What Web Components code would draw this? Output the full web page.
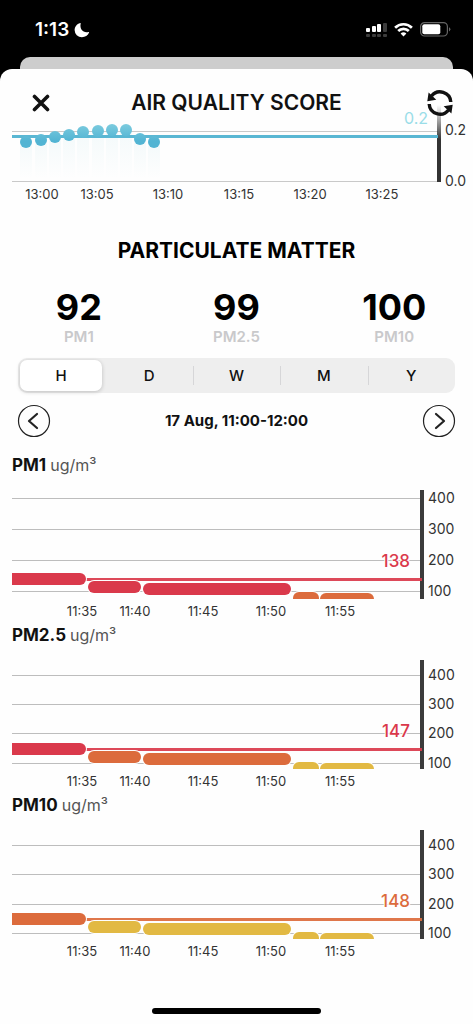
<!DOCTYPE html>
<html lang="en">
<head>
<meta charset="utf-8">
<meta name="viewport" content="width=device-width, initial-scale=1">
<title>Air Quality Score</title>
<style>
  html { background: #fefefe; }
  body { margin: 0; font-family: Inter, "Liberation Sans", sans-serif; color: #111; }
</style>
</head>
<body>
<air-app></air-app>
<script>
const define = (name, render) => customElements.define(name, class extends HTMLElement {
  connectedCallback() {
    if (this.shadowRoot) return;
    this.attachShadow({ mode: 'open' }).innerHTML = render(this);
  }
});

define('status-bar', () => `
  <style>
    :host { display: flex; align-items: center; justify-content: space-between; height: 57px; padding: 2px 22px 0 35px; box-sizing: border-box; color: #fff; }
    .time, .icons { display: flex; align-items: center; }
    .time { gap: 5px; font-size: 19px; font-weight: 600; line-height: 24px; }
    .icons { gap: 7px; }
    svg { display: block; }
  </style>
  <span class="time"><span>1:13</span>
    <svg width="16" height="16" viewBox="0 0 16 16"><path fill="#fff" d="M6.200 .9C2.800 1.900 .6 4.700 .6 8.100a7.300 7.300 0 0 0 7.300 7.200c3.300 0 6-1.900 7.200-4.700.2-.5-.1-.7-.6-.6C9.500 11.300 5.300 7.500 6.700 1.500c.1-.5-.1-.7-.5-.6Z"/></svg>
  </span>
  <span class="icons">
    <svg width="21" height="16" viewBox="0 0 21 16">
      <g fill="#fff"><rect x="0" y="6" width="4" height="4" rx="1"/><rect x="6" y="4" width="4" height="6" rx="1"/><rect x="11" y="2" width="4" height="8" rx="1"/></g>
      <g fill="#3c3c3c"><rect x="17" y="1" width="4" height="9" rx="1"/><rect x="0" y="12" width="4" height="3" rx="1"/><rect x="6" y="12" width="4" height="3" rx="1"/><rect x="11" y="12" width="4" height="3" rx="1"/><rect x="17" y="12" width="4" height="3" rx="1"/></g>
    </svg>
    <svg width="19" height="15" viewBox="0 0 19 15" fill="none" stroke="#fff" stroke-width="2.700">
      <path d="M1.100 5.700a12 12 0 0 1 16.800 0"/><path d="M4.200 9a7.600 7.600 0 0 1 10.600 0"/><path fill="#fff" stroke="none" d="M9.500 14.500 6.600 11.600a4.200 4.200 0 0 1 5.800 0Z"/>
    </svg>
    <svg width="31" height="15" viewBox="0 0 31 15">
      <rect x=".6" y=".6" width="26.800" height="13.400" rx="4" fill="none" stroke="#666" stroke-width="1.200"/>
      <rect x="2.300" y="2.300" width="18" height="10" rx="2" fill="#fff"/>
      <path d="M29 5.200v4.200a2.300 2.300 0 0 0 0-4.200Z" fill="#666"/>
    </svg>
  </span>`);

define('sheet-header', () => `
  <style>
    :host { display: grid; grid-template-columns: 48px 1fr 48px; align-items: center; padding: 18px 17px 6px; position: relative; z-index: 1; }
    h1 { margin: 0; font-size: 21px; font-weight: 600; line-height: 32px; text-align: center; white-space: nowrap; }
    button { width: 48px; height: 32px; padding: 0; border: 0; background: none; display: grid; place-items: center; cursor: pointer; }
    button:last-child { width: 32px; justify-self: end; }
  </style>
  <button aria-label="Close"><svg width="18" height="18" viewBox="0 0 18 18" stroke="#111" stroke-width="3.600" stroke-linecap="round"><path d="m2.500 2.500 13 13M15.500 2.500l-13 13"/></svg></button>
  <h1><slot></slot></h1>
  <button aria-label="Refresh"><svg width="28" height="28" viewBox="0 0 28 28">
    <g fill="none" stroke="#111" stroke-width="3.400"><path d="M5.500 7A10.800 10.800 0 0 1 24.800 13"/><path d="M22.500 21A10.800 10.800 0 0 1 3.200 15"/></g>
    <path fill="#111" d="M2.600 3.500 1.300 12.200 10.300 10.800ZM25.400 24.500l1.300-8.700-9 1.400Z"/>
  </svg></button>`);

define('score-chart', () => {
  const W = 426, pc = v => v / W * 100 + '%';
  const dots = [[14, 17], [29, 15], [43, 12], [57, 10], [71, 7], [86, 6], [100, 5], [114, 5], [128, 14], [142, 17]];
  const ticks = [[30, '13:00'], [85, '13:05'], [156, '13:10'], [227, '13:15'], [298, '13:20'], [370, '13:25']];
  return `
  <style>
    :host { display: block; padding: 0 35px 0 12px; }
    svg { display: block; width: 100%; height: 80px; overflow: visible; }
    text { font-size: 13px; fill: #333; text-anchor: middle; }
    text.scale { font-size: 14px; text-anchor: start; }
    text.now { font-size: 16px; fill: #9adde8; text-anchor: end; }
  </style>
  <svg role="img" aria-label="Air quality score">
    <defs>
      <linearGradient id="axis" x1="0" y1="0" x2="0" y2="1"><stop offset="0" stop-color="#333" stop-opacity="0"/><stop offset=".45" stop-color="#333"/></linearGradient>
      <linearGradient id="dot" gradientUnits="userSpaceOnUse" x1="0" y1="-4" x2="0" y2="16"><stop offset="0" stop-color="#83cfe0"/><stop offset="1" stop-color="#52b4d3"/></linearGradient>
      <linearGradient id="stem" x1="0" y1="0" x2="0" y2="1"><stop offset="0" stop-color="#52b4c3" stop-opacity=".06"/><stop offset="1" stop-color="#52b4c3" stop-opacity="0"/></linearGradient>
    </defs>
    <rect y="6" width="100%" height="1" fill="#c9c9c9"/><rect y="56" width="100%" height="1" fill="#c9c9c9"/>
    ${dots.map(d => `<rect x="${pc(d[0] - 6)}" y="${d[1]}" width="${pc(12)}" height="${54 - d[1]}" fill="url(#stem)"/>`).join('')}
    <svg y="-20" width="100%" height="77" overflow="visible"><rect x="100%" width="4" height="77" transform="translate(-1 0)" fill="url(#axis)"/></svg>
    <rect y="10" width="100%" height="3" fill="#5ab7d3"/>
    ${dots.map(d => `<circle cx="${pc(d[0])}" cy="${d[1]}" r="6" fill="url(#dot)"/>`).join('')}
    ${ticks.map(t => `<text x="${pc(t[0])}" y="74">${t[1]}</text>`).join('')}
    <text class="now" x="${pc(416)}" y="-1">0.2</text>
    <text class="scale" x="${pc(433)}" y="10">0.2</text><text class="scale" x="${pc(433)}" y="61">0.0</text>
  </svg>`;
});

define('pm-reading', el => `
  <style>
    :host { display: grid; justify-items: center; }
    strong { font-size: 36px; font-weight: 700; line-height: 40px; color: #000; }
    span { font-size: 15px; font-weight: 600; line-height: 20px; color: #c9c9cb; }
  </style>
  <strong>${el.getAttribute('value')}</strong><span><slot></slot></span>`);

define('range-tabs', () => `
  <style>
    :host { display: block; margin: 11px 18px 0; }
    fieldset { display: grid; grid-template-columns: repeat(5, 1fr); height: 35px; margin: 0; padding: 0; border: 0; border-radius: 9px; background: #eee; }
    label { position: relative; display: grid; place-items: center; font-size: 15px; font-weight: 500; color: #111; cursor: pointer; }
    input { position: absolute; inset: 0; margin: 0; opacity: 0; }
    label + label:not(:nth-child(2))::before { content: ""; position: absolute; left: 0; top: 8px; bottom: 8px; width: 1px; background: #d6d6d8; }
    label:has(input:checked) { margin: 2px 3px 2px 2px; border-radius: 7px; background: #fff; box-shadow: 0 1px 4px #0003; }
  </style>
  <fieldset aria-label="Time range">${['H', 'D', 'W', 'M', 'Y'].map((t, i) => `<label><input type="radio" name="range" ${i ? '' : 'checked'}><span>${t}</span></label>`).join('')}</fieldset>`);

define('period-nav', () => `
  <style>
    :host { display: flex; align-items: center; justify-content: space-between; margin: 11px 17px 17px 17px; }
    button { width: 34px; height: 34px; padding: 0; border: 0; background: none; cursor: pointer; }
    svg { display: block; }
    time { font-size: 15px; font-weight: 700; line-height: 20px; }
  </style>
  <button aria-label="Previous hour"><svg width="34" height="34" viewBox="0 0 34 34" fill="none" stroke="#222"><circle cx="17" cy="17" r="15.500" stroke-width="1.200"/><path d="m20 10-8 7 8 7" stroke-width="2.200" stroke-linecap="round" stroke-linejoin="round"/></svg></button>
  <time><slot></slot></time>
  <button aria-label="Next hour"><svg width="34" height="34" viewBox="0 0 34 34" fill="none" stroke="#222"><circle cx="17" cy="17" r="15.500" stroke-width="1.200"/><path d="m14 10 8 7-8 7" stroke-width="2.200" stroke-linecap="round" stroke-linejoin="round"/></svg></button>`);

define('pm-chart', el => {
  const W = 410, pc = v => v / W * 100 + '%';
  const colours = { r: '#da394b', o: '#dc6b3c', y: '#e2b943' };
  const levels = el.getAttribute('levels').split('');
  const grid = el.getAttribute('grid').split(' ').map(Number);
  const bars = [[-20, 94, 83], [76, 53, 91], [131, 148, 93], [281, 26, 102], [308, 54, 103]];
  const ticks = [[70, '11:35'], [123, '11:40'], [191, '11:45'], [259, '11:50'], [328, '11:55']];
  const main = colours[levels[0]];
  return `
  <style>
    :host { display: block; padding: 0 51px 0 12px; }
    h3 { margin: 0 0 15px; font-size: 17px; font-weight: 700; line-height: 20px; white-space: nowrap; }
    h3 span { font-size: 16px; font-weight: 400; color: #555; }
    svg { display: block; width: 100%; overflow: visible; }
    svg.plot { overflow: hidden; }
    text { font-size: 13px; fill: #333; text-anchor: middle; }
    text.scale { font-size: 14px; text-anchor: start; }
    text.now { font-size: 17px; font-weight: 500; text-anchor: end; paint-order: stroke; stroke: #fefefe; stroke-width: 2px; }
  </style>
  <h3><slot></slot> <span>ug/m³</span></h3>
  <svg height="135" role="img" aria-label="Readings over the hour">
    ${grid.map(y => `<rect y="${y}" width="100%" height="1" fill="#bdbdbd"/>`).join('')}
    <svg y="0" width="100%" height="109" overflow="visible"><rect x="100%" width="4" height="109" transform="translate(-2 0)" fill="#3b3b3b"/></svg>
    <rect y="88" width="100%" height="3" fill="${main}" opacity=".92"/>
    <svg class="plot" width="100%" height="109">
      ${bars.map((b, i) => `<rect x="${pc(b[0])}" y="${b[2]}" width="${pc(b[1])}" height="12" rx="6" fill="${colours[levels[i]]}" stroke="#fefefe" stroke-width="2" paint-order="stroke"/>`).join('')}
    </svg>
    <text class="now" x="${pc(398)}" y="77" style="fill:${main}">${el.getAttribute('value')}</text>
    ${grid.map((y, i) => `<text class="scale" x="${pc(416)}" y="${y + 5}">${400 - i * 100}</text>`).join('')}
    ${ticks.map(t => `<text x="${pc(t[0])}" y="126">${t[1]}</text>`).join('')}
  </svg>`;
});

define('air-app', () => `
  <style>
    :host { display: flex; flex-direction: column; min-height: 100vh; background: #000; }
    .behind { height: 12px; margin: 0 20px; border-radius: 10px 10px 0 0; background: #cdcdcd; }
    main { flex: 1; display: flex; flex-direction: column; border-radius: 12px 12px 0 0; background: #fefefe; }
    h2 { margin: 32px 0 22px; font-size: 21px; font-weight: 700; line-height: 28px; text-align: center; color: #000; }
    .readings { display: grid; grid-template-columns: repeat(3, 1fr); }
    .home { width: 169px; height: 6px; border-radius: 3px; background: #000; margin: auto auto 10px; }
  </style>
  <status-bar></status-bar>
  <div class="behind"></div>
  <main>
    <sheet-header>AIR QUALITY SCORE</sheet-header>
    <score-chart></score-chart>
    <h2>PARTICULATE MATTER</h2>
    <div class="readings"><pm-reading value="92">PM1</pm-reading><pm-reading value="99">PM2.5</pm-reading><pm-reading value="100">PM10</pm-reading></div>
    <range-tabs></range-tabs>
    <period-nav>17 Aug, 11:00-12:00</period-nav>
    <pm-chart value="138" levels="rrroo" grid="8 39 70 101">PM1</pm-chart>
    <pm-chart value="147" levels="rooyy" grid="15 44 73 103">PM2.5</pm-chart>
    <pm-chart value="148" levels="oyyyy" grid="15 44 74 103">PM10</pm-chart>
    <div class="home"></div>
  </main>`);
</script>
</body>
</html>
